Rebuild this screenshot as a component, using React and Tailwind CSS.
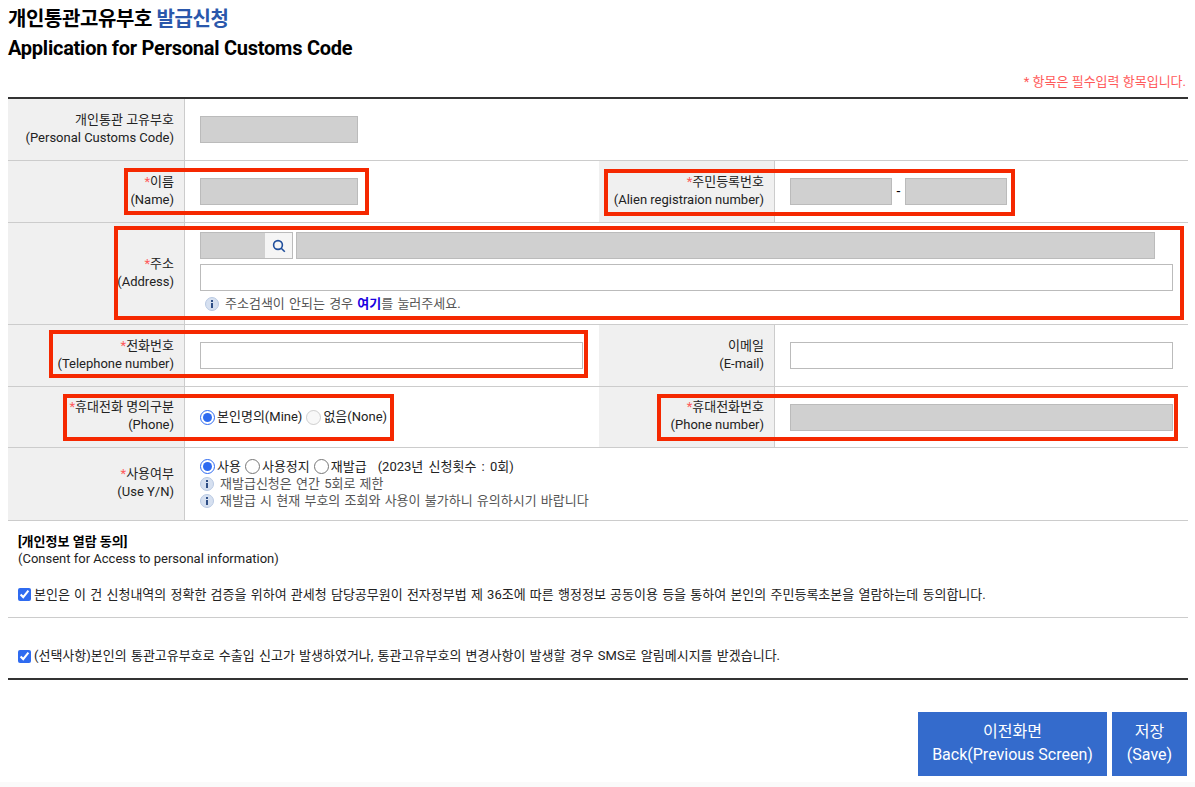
import React from 'react'

const font = { fontFamily: 'Roboto, "Noto Sans CJK KR", "Noto Sans", sans-serif' }

const grayInput = 'h-[27px] bg-[#d0d0d0] border border-[#bbb] outline-none'
const whiteInput = 'h-[27px] bg-white border border-[#bbb] outline-none'

const InfoIcon = ({ className = '' }) => (
  <svg width="14" height="14" viewBox="0 0 14 14" className={`shrink-0 ${className}`}>
    <circle cx="7" cy="7" r="6.5" fill="#d6e0f0" stroke="#b9c9e2" />
    <rect x="6" y="3" width="2" height="2" fill="#2f4f86" />
    <rect x="6" y="6" width="2" height="5" fill="#2f4f86" />
  </svg>
)

const Label = ({ required, ko, en, width = 'w-[177px]' }) => (
  <div className={`${width} shrink-0 bg-[#f0f0f0] border-r border-[#ccc] flex flex-col justify-center items-end pr-[10px] pb-[2px] text-[13px] leading-[18px] text-[#222]`}>
    <div className="whitespace-nowrap">
      {required && <span className="text-[#ff5a5a]">*</span>}
      {ko}
    </div>
    <div className="whitespace-nowrap">({en})</div>
  </div>
)

const Radio = ({ checked, disabled, label, name }) => (
  <label className="flex items-center gap-[2px] whitespace-nowrap">
    <input type="radio" name={name} defaultChecked={checked} disabled={disabled} className="w-[15px] h-[15px] m-0 accent-[#2f6bf0]" />
    <span>{label}</span>
  </label>
)

const Check = ({ children }) => (
  <label className="flex items-center gap-[3px] text-[13px] text-[#222] [word-spacing:1px] whitespace-nowrap">
    <input type="checkbox" defaultChecked className="w-[13px] h-[13px] m-0 accent-[#2f6bf0]" />
    <span>{children}</span>
  </label>
)

// red annotation boxes drawn over the form
const RedBox = ({ className }) => (
  <div className={`absolute border-[4px] border-[#f52800] pointer-events-none ${className}`} />
)

export default function App() {
  return (
    <div style={font} className="relative w-[1195px] h-[787px] overflow-hidden bg-white text-black">
      <div className="px-2 pt-[5px]">
        <h1 className="text-[20px] leading-[29px] font-bold tracking-[-0.4px]">
          개인통관고유부호 <span className="text-[#2a57ab]">발급신청</span>
        </h1>
        <h2 className="text-[20px] leading-[29px] font-bold tracking-[-0.25px]">Application for Personal Customs Code</h2>

        <p className="mt-[9px] text-right text-[13px] leading-[20px] text-[#ff5a5a] pr-px">* 항목은 필수입력 항목입니다.</p>

        <div className="w-[1180px] mt-[5px] border-t-2 border-[#333]">
          <div className="flex h-[62px] border-b border-[#ccc]">
            <Label ko="개인통관 고유부호" en="Personal Customs Code" />
            <div className="flex items-center pl-[15px]">
              <input readOnly className={`${grayInput} w-[158px]`} />
            </div>
          </div>

          <div className="flex h-[62px] border-b border-[#ccc]">
            <Label required ko="이름" en="Name" />
            <div className="w-[414px] flex items-center pl-[15px]">
              <input readOnly className={`${grayInput} w-[158px]`} />
            </div>
            <Label required ko="주민등록번호" en="Alien registraion number" width="w-[176px]" />
            <div className="flex items-center pl-[15px] text-[14px]">
              <input readOnly className={`${grayInput} w-[102px]`} />
              <span className="w-[13px] text-center">-</span>
              <input readOnly className={`${grayInput} w-[102px]`} />
            </div>
          </div>

          <div className="flex h-[102px] border-b border-[#ccc]">
            <Label required ko="주소" en="Address" />
            <div className="flex-1 pl-[15px] pr-[14px] pt-[9px]">
              <div className="flex gap-[3px]">
                <div className="flex w-[93px] h-[27px] border border-[#bbb]">
                  <div className="w-[64px] bg-[#d0d0d0]" />
                  <button className="flex-1 bg-[#f5f5f5] flex items-center justify-center">
                    <svg width="14" height="14" viewBox="0 0 14 14" fill="none" stroke="#1f4e9c" strokeWidth="1.6">
                      <circle cx="6" cy="6" r="4.4" />
                      <path d="M9.2 9.2 L12.8 12.8" />
                    </svg>
                  </button>
                </div>
                <input readOnly className={`${grayInput} w-[859px]`} />
              </div>
              <input readOnly className={`${whiteInput} w-[973px] block mt-[5px]`} />
              <div className="flex items-center gap-[6px] mt-[4px] pl-[5px] text-[13px] leading-[18px] text-[#555] [word-spacing:1px]">
                <InfoIcon />
                <span>주소검색이 안되는 경우 <a className="font-bold text-[#1a00e0]">여기</a>를 눌러주세요.</span>
              </div>
            </div>
          </div>

          <div className="flex h-[62px] border-b border-[#ccc]">
            <Label required ko="전화번호" en="Telephone number" />
            <div className="w-[414px] flex items-center pl-[15px]">
              <input readOnly className={`${whiteInput} w-[383px]`} />
            </div>
            <Label ko="이메일" en="E-mail" width="w-[176px]" />
            <div className="flex items-center pl-[15px]">
              <input readOnly className={`${whiteInput} w-[383px]`} />
            </div>
          </div>

          <div className="flex h-[61px] border-b border-[#ccc]">
            <Label required ko="휴대전화 명의구분" en="Phone" />
            <div className="w-[414px] flex items-center gap-[4px] pl-[15px] text-[13px] text-[#222]">
              <Radio name="owner" checked label="본인명의(Mine)" />
              <Radio name="owner" disabled label="없음(None)" />
            </div>
            <Label required ko="휴대전화번호" en="Phone number" width="w-[176px]" />
            <div className="flex items-center pl-[15px]">
              <input readOnly className={`${grayInput} w-[383px]`} />
            </div>
          </div>

          <div className="flex h-[73px] border-b border-[#ccc]">
            <Label required ko="사용여부" en="Use Y/N" />
            <div className="flex-1 pl-[15px] pt-[10px] text-[13px] leading-[17px] [word-spacing:1px]">
              <div className="flex items-center gap-[4px] text-[#222]">
                <Radio name="use" checked label="사용" />
                <Radio name="use" label="사용정지" />
                <Radio name="use" label="재발급" />
                <span className="ml-[7px] [word-spacing:2px]">(2023년 신청횟수 : 0회)</span>
              </div>
              <div className="flex items-center gap-[6px] text-[#555]">
                <InfoIcon />
                <span>재발급신청은 연간 5회로 제한</span>
              </div>
              <div className="flex items-center gap-[6px] text-[#555]">
                <InfoIcon />
                <span>재발급 시 현재 부호의 조회와 사용이 불가하니 유의하시기 바랍니다</span>
              </div>
            </div>
          </div>

          <div className="px-[10px] pt-[12px] text-[13px] leading-[17px] text-[#222]">
            <p className="font-bold text-black">[개인정보 열람 동의]</p>
            <p>(Consent for Access to personal information)</p>
          </div>
          <div className="h-[51px] flex items-center px-[10px] pt-[5px] border-b border-[#ccc]">
            <Check>본인은 이 건 신청내역의 정확한 검증을 위하여 관세청 담당공무원이 전자정부법 제 36조에 따른 행정정보 공동이용 등을 통하여 본인의 주민등록초본을 열람하는데 동의합니다.</Check>
          </div>
          <div className="h-[62px] flex items-center px-[10px] pt-[16px] border-b-2 border-[#333]">
            <Check>(선택사항)본인의 통관고유부호로 수출입 신고가 발생하였거나, 통관고유부호의 변경사항이 발생할 경우 SMS로 알림메시지를 받겠습니다.</Check>
          </div>
        </div>

        <div className="w-[1179px] flex justify-end gap-[5px] mt-[32px]">
          <button className="w-[189px] h-[64px] pb-[2px] bg-[#346bcc] text-white text-[16px] leading-[23px]">
            이전화면<br />Back(Previous Screen)
          </button>
          <button className="w-[75px] h-[64px] pb-[2px] bg-[#346bcc] text-white text-[16px] leading-[23px]">
            저장<br />(Save)
          </button>
        </div>
      </div>

      <div className="absolute left-0 right-0 bottom-0 h-[5px] bg-[#fafafa]" />

      <RedBox className="left-[124px] top-[168px] w-[245px] h-[47px]" />
      <RedBox className="left-[604px] top-[169px] w-[411px] h-[47px]" />
      <RedBox className="left-[114px] top-[226px] w-[1070px] h-[94px]" />
      <RedBox className="left-[49px] top-[330px] w-[539px] h-[48px]" />
      <RedBox className="left-[63px] top-[394px] w-[331px] h-[47px]" />
      <RedBox className="left-[657px] top-[394px] w-[521px] h-[47px]" />
    </div>
  )
}
